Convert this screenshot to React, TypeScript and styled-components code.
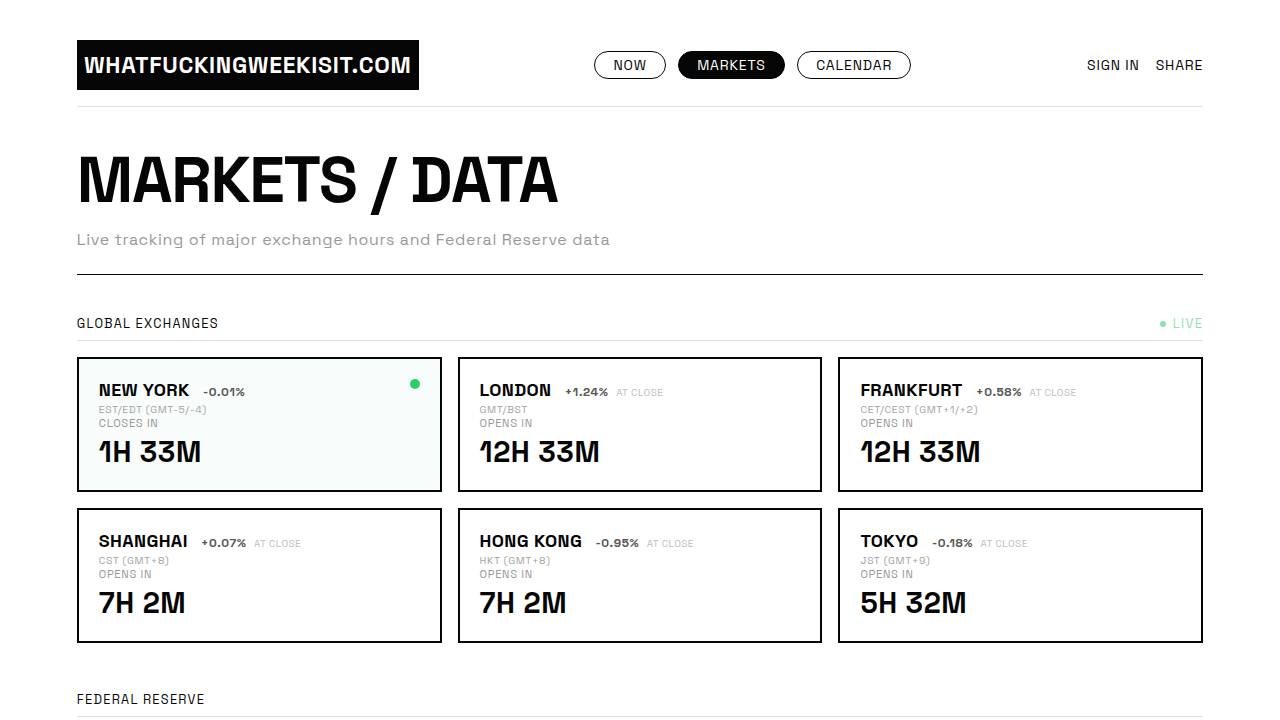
import React from "react";
import styled, { createGlobalStyle } from "styled-components";

const GlobalStyle = createGlobalStyle`
  *, *::before, *::after { box-sizing: border-box; }
  html, body { margin: 0; background: #fff; }
  body {
    color: #050505;
    font-family: "Space Grotesk", Roboto, "Liberation Sans", sans-serif;
    overflow: hidden;
    height: 720px;
  }
`;

const Page = styled.div`
  padding: 40px 6% 0;
`;

const Header = styled.header`
  display: flex;
  align-items: center;
  justify-content: space-between;
  padding-bottom: 16px;
  border-bottom: 1px solid #e2e2e2;
`;

const Logo = styled.a`
  height: 50px;
  padding: 0 7.2px;
  background: #050505;
  color: #fff;
  font-size: 23px;
  font-weight: 700;
  line-height: 50px;
  letter-spacing: 0.72px;
  white-space: nowrap;
`;

const Nav = styled.nav`
  display: flex;
  gap: 12px;
`;

const Pill = styled.a<{ $active?: boolean }>`
  height: 28px;
  padding: 0 18.2px;
  border: 1px solid #050505;
  border-radius: 14px;
  background: ${(p) => (p.$active ? "#050505" : "#fff")};
  color: ${(p) => (p.$active ? "#fff" : "#050505")};
  font-size: 14px;
  line-height: 26px;
  letter-spacing: 0.06em;
`;

const Account = styled.div`
  display: flex;
  gap: 16px;
  font-size: 14px;
  line-height: 26px;
  letter-spacing: 0.06em;
`;

const Hero = styled.section`
  padding: 41px 0 22px;
  border-bottom: 1px solid #050505;
`;

const Title = styled.h1`
  margin: 0 0 16px;
  font-size: 64px;
  font-weight: 700;
  line-height: 64px;
  letter-spacing: -0.02em;
`;

const Subtitle = styled.p`
  margin: 0;
  color: #999;
  font-size: 16px;
  line-height: 24px;
  letter-spacing: 0.04em;
`;

const Section = styled.section<{ $top: number }>`
  padding-top: ${(p) => p.$top}px;
`;

const SectionHead = styled.div`
  display: flex;
  justify-content: space-between;
  height: 27px;
  border-bottom: 1px solid #e2e2e2;
  font-size: 12.8px;
  line-height: 20px;
  letter-spacing: 0.1em;
`;

const SectionTitle = styled.h2`
  margin: 0;
  font: inherit;
`;

const Live = styled.span`
  display: flex;
  align-items: center;
  gap: 6.5px;
  height: 20px;
  color: #2ecc71;
  opacity: 0.55;

  &::before {
    content: "";
    width: 6px;
    height: 6px;
    margin-top: 0.6px;
    border-radius: 50%;
    background: #2ecc71;
  }
`;

const Grid = styled.div`
  display: grid;
  grid-template-columns: repeat(3, 1fr);
  gap: 16px;
  margin-top: 16px;
`;

const Card = styled.article<{ $open?: boolean }>`
  position: relative;
  height: 135px;
  padding: 20px;
  border: 2px solid #050505;
  background: ${(p) => (p.$open ? "#f8fdfb" : "#fff")};
`;

const OpenDot = styled.span`
  position: absolute;
  top: 20px;
  right: 20px;
  width: 10px;
  height: 10px;
  border-radius: 50%;
  background: #2ecc71;
`;

const CardHead = styled.div`
  display: flex;
  align-items: baseline;
  height: 22px;
  line-height: 22px;
  white-space: nowrap;
`;

const City = styled.h3`
  margin: 0 13.3px 0 0;
  font-size: 18px;
  font-weight: 700;
  letter-spacing: 0.02em;
`;

const Change = styled.span`
  color: #555;
  font-size: 12px;
  font-weight: 600;
  letter-spacing: 0.05em;
`;

const AtClose = styled.span`
  margin-left: 7.6px;
  color: #bdbdbd;
  font-size: 10px;
  letter-spacing: 0.04em;
`;

const Zone = styled.div`
  margin-top: 2px;
  color: #a3a3a3;
  font-size: 10.4px;
  line-height: 13px;
  letter-spacing: 0.06em;
`;

const Status = styled.div`
  color: #999;
  font-size: 11.2px;
  line-height: 14px;
  letter-spacing: 0.06em;
`;

const Countdown = styled.div`
  margin-top: 4px;
  font-size: 28.8px;
  font-weight: 700;
  line-height: 36px;
  letter-spacing: 0.02em;
`;

type Exchange = {
  city: string;
  change: string;
  zone: string;
  time: string;
  open?: boolean;
};

const exchanges: Exchange[] = [
  { city: "NEW YORK", change: "-0.01%", zone: "EST/EDT (GMT-5/-4)", time: "1H 33M", open: true },
  { city: "LONDON", change: "+1.24%", zone: "GMT/BST", time: "12H 33M" },
  { city: "FRANKFURT", change: "+0.58%", zone: "CET/CEST (GMT+1/+2)", time: "12H 33M" },
  { city: "SHANGHAI", change: "+0.07%", zone: "CST (GMT+8)", time: "7H 2M" },
  { city: "HONG KONG", change: "-0.95%", zone: "HKT (GMT+8)", time: "7H 2M" },
  { city: "TOKYO", change: "-0.18%", zone: "JST (GMT+9)", time: "5H 32M" },
];

function ExchangeCard({ city, change, zone, time, open }: Exchange) {
  return (
    <Card $open={open}>
      {open && <OpenDot />}
      <CardHead>
        <City>{city}</City>
        <Change>{change}</Change>
        {!open && <AtClose>AT CLOSE</AtClose>}
      </CardHead>
      <Zone>{zone}</Zone>
      <Status>{open ? "CLOSES IN" : "OPENS IN"}</Status>
      <Countdown>{time}</Countdown>
    </Card>
  );
}

export default function App() {
  return (
    <>
      <GlobalStyle />
      <Page>
        <Header>
          <Logo>WHATFUCKINGWEEKISIT.COM</Logo>
          <Nav>
            <Pill>NOW</Pill>
            <Pill $active>MARKETS</Pill>
            <Pill>CALENDAR</Pill>
          </Nav>
          <Account>
            <span>SIGN IN</span>
            <span>SHARE</span>
          </Account>
        </Header>
        <Hero>
          <Title>MARKETS / DATA</Title>
          <Subtitle>Live tracking of major exchange hours and Federal Reserve data</Subtitle>
        </Hero>
        <Section $top={39}>
          <SectionHead>
            <SectionTitle>GLOBAL EXCHANGES</SectionTitle>
            <Live>LIVE</Live>
          </SectionHead>
          <Grid>
            {exchanges.map((e) => (
              <ExchangeCard key={e.city} {...e} />
            ))}
          </Grid>
        </Section>
        <Section $top={47}>
          <SectionHead>
            <SectionTitle>FEDERAL RESERVE</SectionTitle>
          </SectionHead>
        </Section>
      </Page>
    </>
  );
}
